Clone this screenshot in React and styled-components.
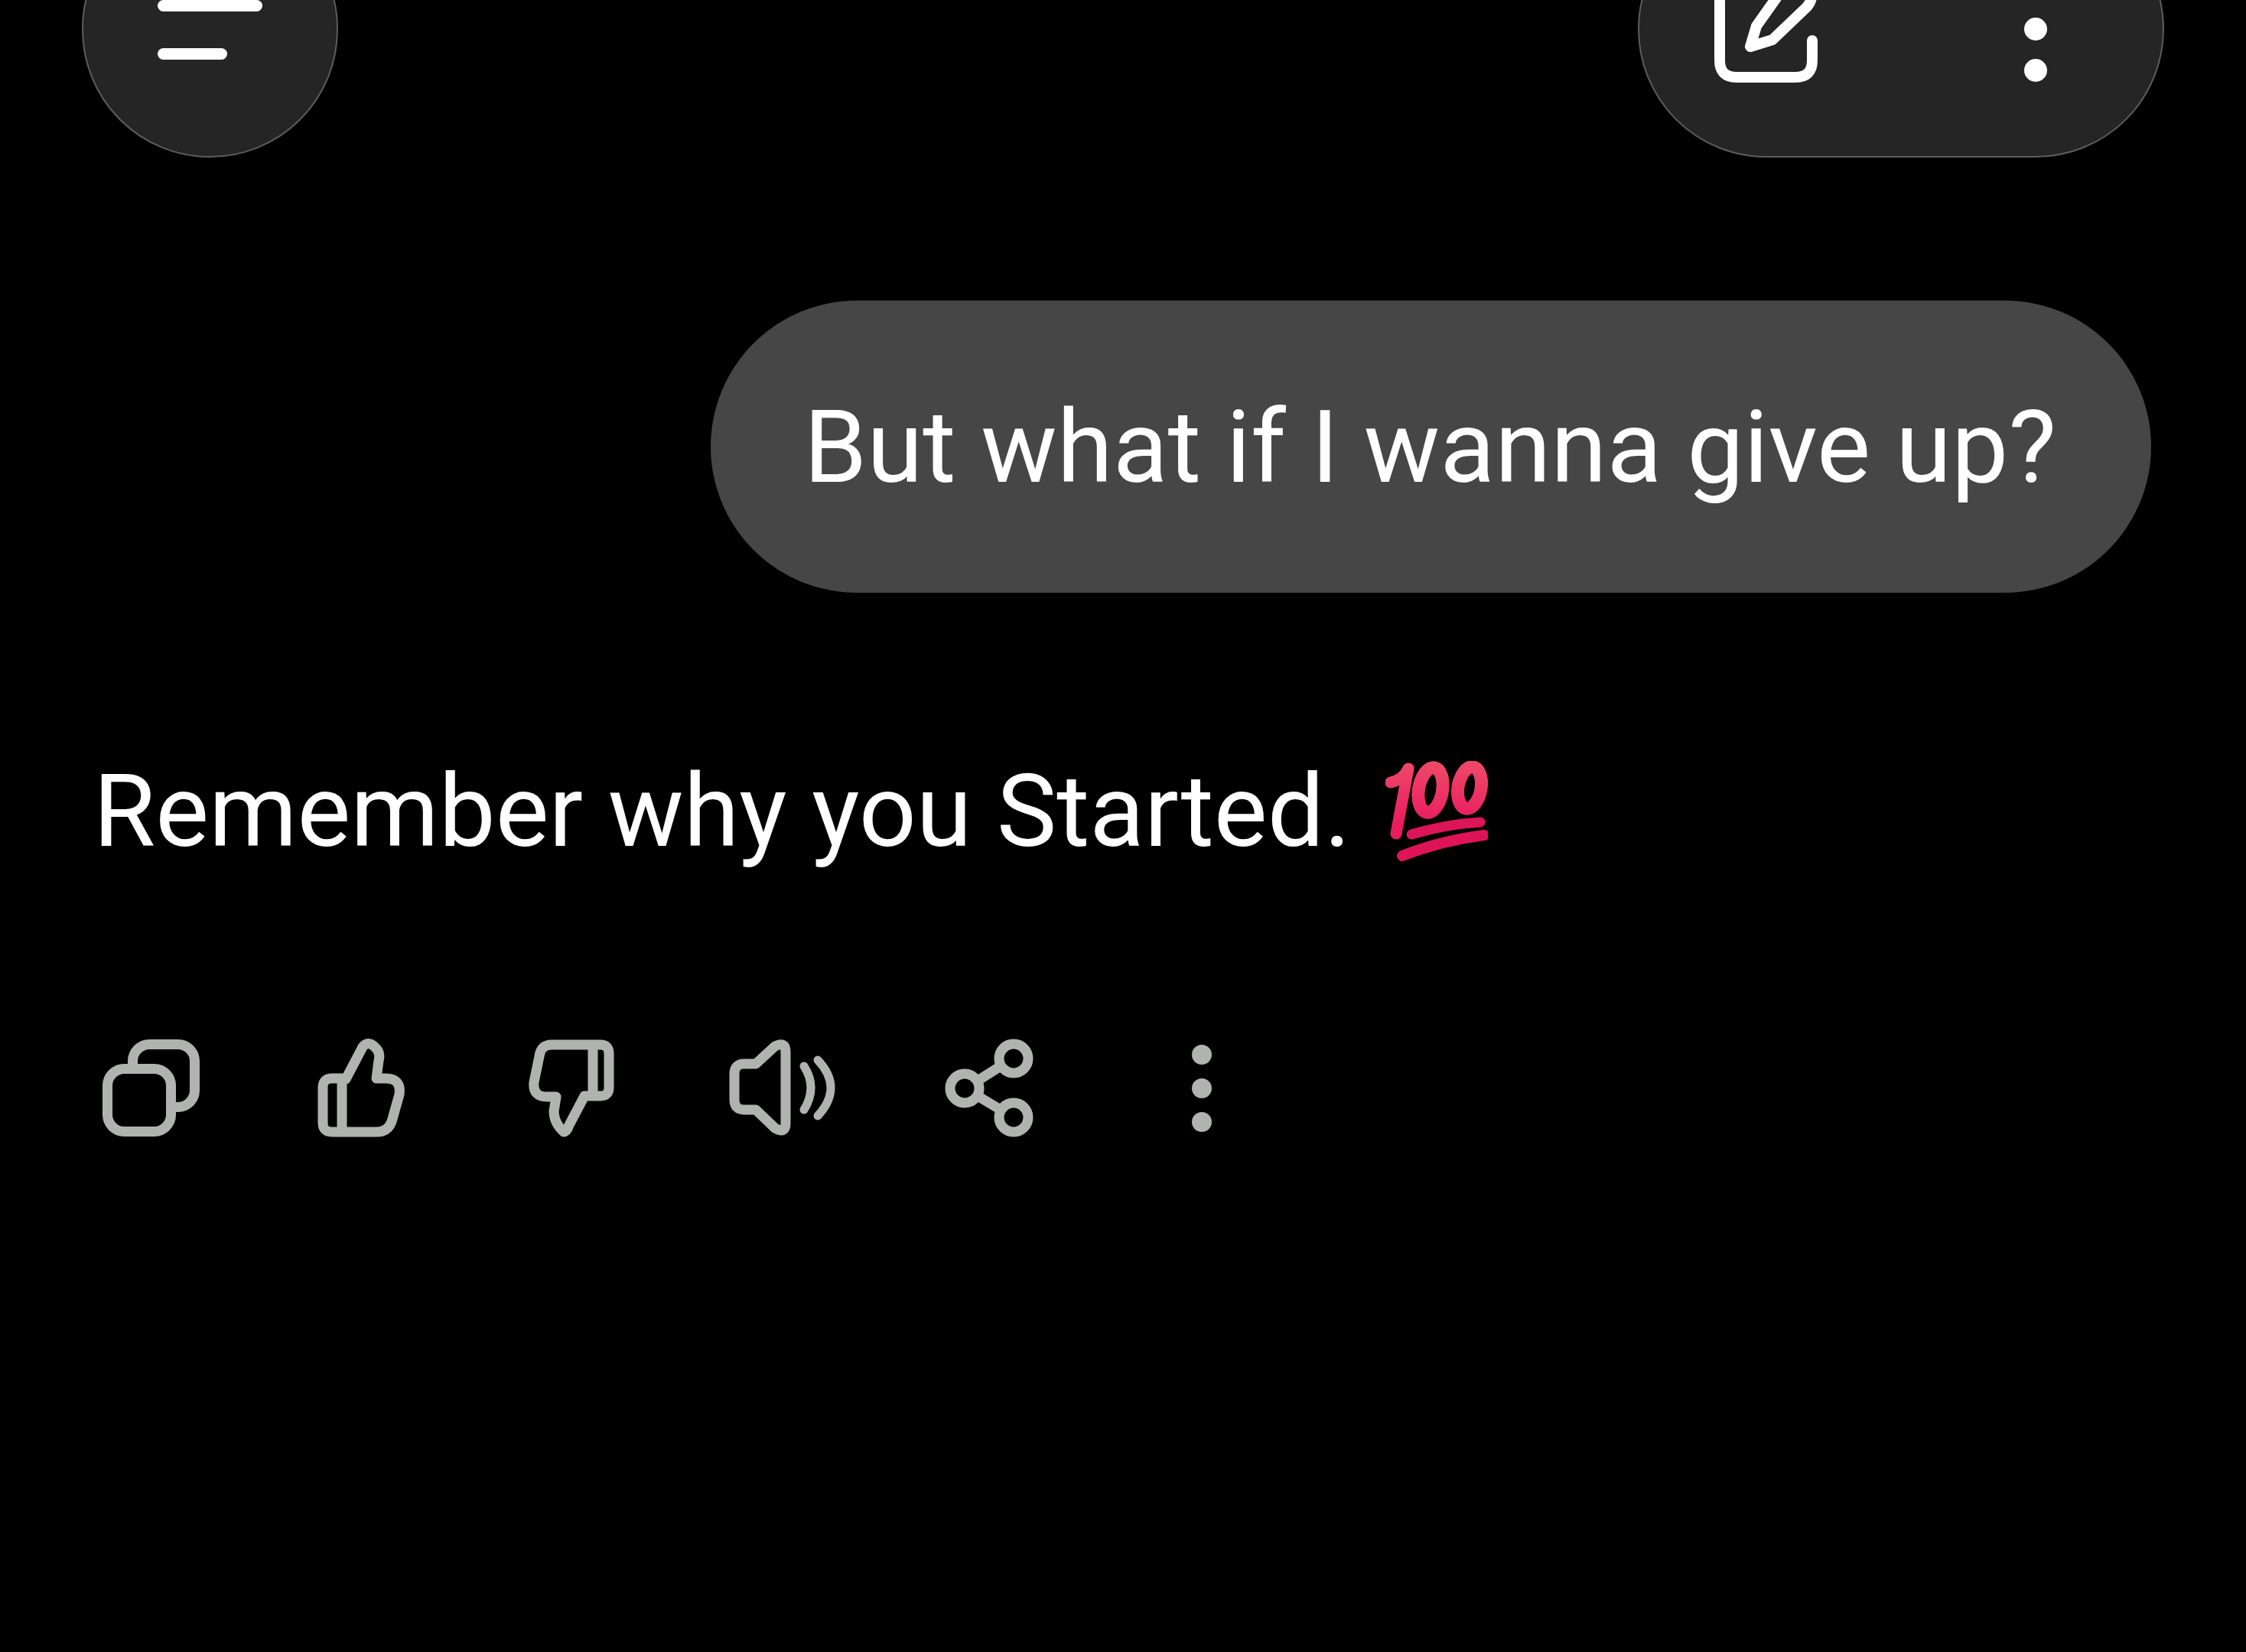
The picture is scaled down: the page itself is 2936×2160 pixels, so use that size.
import React from 'react'
import styled, { createGlobalStyle } from 'styled-components'

const GlobalStyle = createGlobalStyle`
  html, body {
    margin: 0;
    padding: 0;
    background: #000;
    overflow: hidden;
  }
`

const Screen = styled.div`
  width: 2936px;
  height: 2160px;
  overflow: hidden;
  background: #000;
  color: #fff;
  font-family: Roboto, "Liberation Sans", sans-serif;
  display: flex;
  flex-direction: column;
`

const Toolbar = styled.div`
  margin-top: -130px;
  padding: 0 107px;
  display: flex;
  justify-content: space-between;
`

const GlassButton = styled.div`
  box-sizing: border-box;
  height: 336px;
  border-radius: 168px;
  background: #242524;
  border: 2px solid #5c5d5c;
`

const MenuButton = styled(GlassButton)`
  width: 335px;
  padding: 2px 0 0 97px;
  display: flex;
  flex-direction: column;
  justify-content: center;
  align-items: flex-start;
  gap: 48px;
`

const MenuLine = styled.span`
  width: ${({ $width }) => $width}px;
  height: 15px;
  border-radius: 8px;
  background: #fff;
`

const ActionPill = styled(GlassButton)`
  width: 688px;
  padding: 0 151px 0 90px;
  display: flex;
  align-items: center;
  justify-content: space-between;
`

const EditIcon = styled.svg`
  width: 150px;
  height: 150px;
  fill: none;
  stroke: #fff;
  stroke-width: 14;
  stroke-linecap: round;
  stroke-linejoin: round;
`

const DotColumn = styled.div`
  display: flex;
  flex-direction: column;
  align-items: center;
  gap: ${({ $gap }) => $gap}px;
`

const Dot = styled.span`
  width: ${({ $size }) => $size}px;
  height: ${({ $size }) => $size}px;
  border-radius: 50%;
  background: ${({ $color }) => $color};
`

const Bubble = styled.div`
  align-self: flex-end;
  margin: 187px 124px 0 0;
  box-sizing: border-box;
  height: 382px;
  padding: 0 124px 0 122px;
  border-radius: 191px;
  background: #454645;
  display: flex;
  align-items: center;
  font-size: 132.4px;
  white-space: nowrap;
`

const Reply = styled.div`
  margin: 216px 0 0 122px;
  display: flex;
  align-items: center;
  gap: 45px;
  height: 140px;
  font-size: 131.7px;
  white-space: nowrap;
`

const EmojiIcon = styled.svg`
  width: 134px;
  height: 132px;
  flex: none;
  fill: none;
  stroke-linecap: round;
  stroke-linejoin: round;
`

const ActionRow = styled.div`
  margin: 212px 0 0 60px;
  display: flex;
  align-items: center;
`

const ActionCell = styled.div`
  width: 274.8px;
  height: 160px;
  display: flex;
  align-items: center;
  justify-content: center;
`

const ActionIcon = styled.svg`
  width: 160px;
  height: 160px;
  fill: none;
  stroke: #b1b3b1;
  stroke-width: 13;
  stroke-linecap: round;
  stroke-linejoin: round;
`

const Hundred = () => (
  <EmojiIcon viewBox="32 24 134 132" role="img" aria-label="100">
    <defs>
      <linearGradient id="hundredFill" x1="0" y1="25" x2="0" y2="105" gradientUnits="userSpaceOnUse">
        <stop offset="0" stopColor="#ee4a68" />
        <stop offset="1" stopColor="#ea1c60" />
      </linearGradient>
    </defs>
    <g stroke="url(#hundredFill)">
      <path d="M39 52 Q56 48 62 34 L46 119" strokeWidth="15" />
      <ellipse cx="91" cy="62" rx="15.5" ry="29.5" strokeWidth="17" transform="rotate(10 91 62)" />
      <ellipse cx="142" cy="59" rx="15" ry="27.5" strokeWidth="17" transform="rotate(10 142 59)" />
    </g>
    <g stroke="#dd1459">
      <path d="M66 120 Q110 107 156 104" strokeWidth="13" />
      <path d="M54 148 Q105 128 161 121" strokeWidth="14" />
    </g>
  </EmojiIcon>
)

const App = () => {
  return (
    <Screen>
      <GlobalStyle />
      <Toolbar>
        <MenuButton>
          <MenuLine $width={137} />
          <MenuLine $width={91} />
        </MenuButton>
        <ActionPill>
          <EditIcon viewBox="2233 -38 150 150">
            <path d="M2280 -20 H2270 Q2248 -20 2248 2 V78 Q2248 100 2270 100 H2347 Q2369 100 2369 78 V52" />
            <path d="M2288 60 L2296 33 L2330 -15 Q2345 -32 2360 -20 Q2375 -8 2362 8 L2317 51 Z" />
          </EditIcon>
          <DotColumn $gap={24}>
            <Dot $size={30} $color="#fff" />
            <Dot $size={30} $color="#fff" />
            <Dot $size={30} $color="#fff" />
          </DotColumn>
        </ActionPill>
      </Toolbar>
      <Bubble>But what if I wanna give up?</Bubble>
      <Reply>
        Remember why you Started.
        <Hundred />
      </Reply>
      <ActionRow>
        <ActionCell>
          <ActionIcon viewBox="0 0 160 160">
            <rect x="23.5" y="54.5" width="83" height="82" rx="22" />
            <path d="M56.5 54.5 V44.5 a22 22 0 0 1 22-22 H115.5 a22 22 0 0 1 22 22 V82.5 a22 22 0 0 1 -22 22 H106.5" />
          </ActionIcon>
        </ActionCell>
        <ActionCell>
          <ActionIcon viewBox="0 0 160 160">
            <path d="M60 68 L82 26 Q89 17 98 26 Q106 33 103 44 L100 67 H112 Q133 67 130 88 L121 120 Q117 137 100 137 H42 Q30 137 30 125 V79 Q30 67 42 67 H55 V137" />
          </ActionIcon>
        </ActionCell>
        <ActionCell>
          <ActionIcon viewBox="0 0 160 160">
            <path d="M108 23 H54 Q40 23 38 38 L31 72 Q29 91 48 91 H60 L57 110 Q57 125 70 137 Q74 137 77 128 L97 90 H118 Q129 90 129 79 V35 Q129 23 118 23 H108 V90" />
          </ActionIcon>
        </ActionCell>
        <ActionCell>
          <ActionIcon viewBox="0 0 160 160">
            <path d="M46 48 L71 25 Q85 18 85 32 V126 Q85 140 71 132 L46 108 H31 Q18 108 18 95 V61 Q18 48 31 48 Z" />
            <path d="M109 51 Q127 79 109 108" strokeWidth="11" />
            <path d="M127 43 Q161 79 127 116" strokeWidth="11" />
          </ActionIcon>
        </ActionCell>
        <ActionCell>
          <ActionIcon viewBox="0 0 160 160">
            <circle cx="108" cy="41" r="19" />
            <circle cx="108" cy="118" r="19" />
            <circle cx="44" cy="80" r="19" />
            <path d="M61 70 L91 51 M61 90 L91 108" />
          </ActionIcon>
        </ActionCell>
        <ActionCell>
          <DotColumn $gap={18}>
            <Dot $size={26} $color="#b1b3b1" />
            <Dot $size={26} $color="#b1b3b1" />
            <Dot $size={26} $color="#b1b3b1" />
          </DotColumn>
        </ActionCell>
      </ActionRow>
    </Screen>
  )
}

export default App
